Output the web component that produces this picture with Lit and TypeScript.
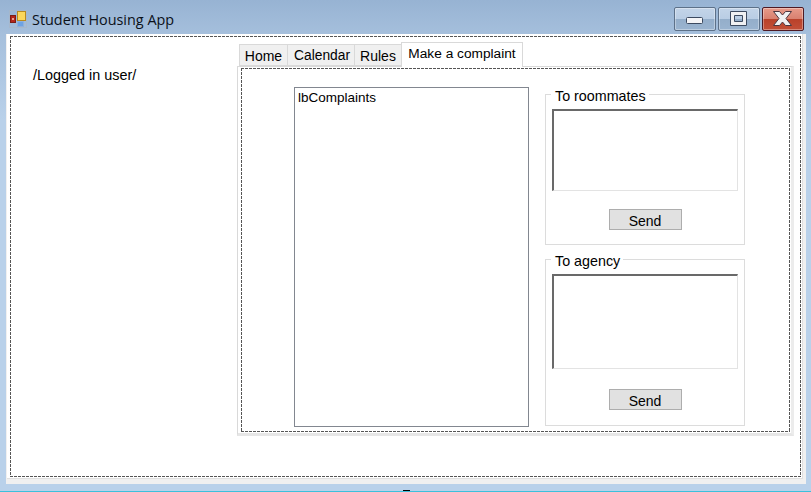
import { html, css, LitElement, svg } from 'lit'
import { customElement } from 'lit/decorators.js'

const TABS = ['Home', 'Calendar', 'Rules']

@customElement('app-root')
export class AppRoot extends LitElement {
  private appIcon() {
    return html`<svg class="app-icon" width="18" height="18" viewBox="0 0 18 18">
      <rect x="0.5" y="0.5" width="17" height="17" fill="none" stroke="#a9b6c6" stroke-opacity="0.7" />
      <rect x="1.5" y="5.500" width="5" height="7" fill="#b3261c" stroke="#7d1d16" />
      <rect x="3" y="8" width="2" height="2" fill="#e8a090" />
      <rect x="8.5" y="1.5" width="8" height="9" fill="#fbd75b" stroke="#b98a1e" />
      <rect x="8.5" y="11.5" width="6" height="5" fill="#6ea3e4" stroke="#8fb0da" />
    </svg>`
  }

  private captionGlyph(kind: string) {
    if (kind === 'min') {
      return svg`<rect x="12.5" y="10.5" width="16" height="6" rx="1" fill="#f4f4f6" stroke="#3c4a60" />`
    }
    if (kind === 'max') {
      return svg`<path fill-rule="evenodd" d="M12.500 4.500h16v14h-16zM16.500 8.500v6h8v-6z" fill="#f0f1f3" stroke="#3c4a60" />`
    }
    return svg`<path d="M11.500 4.500h6l3 3.500 3-3.500h6l-5.500 7 5.500 7h-6l-3-3.500-3 3.500h-6l5.500-7z" fill="#f0f0f2" stroke="#4c3640" />`
  }

  private captionButton(kind: string) {
    return html`<div class="cap ${kind}">
      <svg width="42" height="24" viewBox="0 0 42 24">${this.captionGlyph(kind)}</svg>
    </div>`
  }

  private group(label: string, cls: string) {
    return html`<div class="group ${cls}">
      <span class="legend">${label}</span>
      <div class="textbox"></div>
      <div class="send">Send</div>
    </div>`
  }

  render() {
    return html`
      <div class="titlebar">
        ${this.appIcon()}
        <span class="title">Student Housing App</span>
        <div class="caption">
          ${this.captionButton('min')} ${this.captionButton('max')} ${this.captionButton('close')}
        </div>
      </div>
      <div class="client">
        <div class="surface">
          <div class="dashed form">
            <div class="user">/Logged in user/</div>
            <div class="tabcontrol">
              <div class="tabs">
                ${TABS.map((t) => html`<div class="tab">${t}</div>`)}
                <div class="tab active">Make a complaint</div>
              </div>
              <div class="panel">
                <div class="dashed page">
                  <div class="listbox">lbComplaints</div>
                  <div class="side">
                    ${this.group('To roommates', 'first')} ${this.group('To agency', 'second')}
                  </div>
                </div>
              </div>
            </div>
          </div>
        </div>
      </div>
      <div class="mark"></div>
    `
  }

  static styles = css`
    :host {
      display: block;
      position: relative;
      width: 811px;
      height: 492px;
      overflow: hidden;
      box-sizing: border-box;
      border-bottom: 1px solid #3cc0dc;
      background: linear-gradient(#97b3d3 0, #a5bfdc 34px, #b9d1ea 120px, #b9d1ea 100%);
      font-family: 'Liberation Sans', Arial, sans-serif;
      font-size: 14px;
      color: #000;
    }

    .titlebar {
      display: flex;
      align-items: flex-start;
      height: 34px;
      box-sizing: border-box;
      padding: 7px 7px 0 9px;
    }

    .app-icon {
      margin-top: 3px;
      flex: none;
    }

    .title {
      margin: 3px 0 0 5px;
      font-family: 'Open Sans', sans-serif;
      font-size: 14.4px;
      line-height: 20px;
      color: #0b1118;
    }

    .caption {
      display: flex;
      gap: 2px;
      margin-left: auto;
    }

    .cap {
      width: 42px;
      height: 24px;
      box-sizing: border-box;
      border: 1px solid #5d7189;
      border-radius: 2px;
      box-shadow: inset 0 0 0 1px rgba(255, 255, 255, 0.35);
      background: linear-gradient(#c3d4e8 0, #b9cde4 50%, #94aeca 50%, #9ab4d0 100%);
    }

    .cap svg {
      display: block;
      margin: -1px;
    }

    .close {
      border-color: #4e1a24;
      background: linear-gradient(#e79a8a 0, #d9806f 50%, #b9412a 50%, #c24f38 100%);
    }

    .client {
      width: 800px;
      height: 450px;
      margin-left: 6px;
      box-sizing: border-box;
      border: solid #f0f0f0;
      border-width: 0 3px 5px 1px;
    }

    .surface {
      height: 100%;
      box-sizing: border-box;
      background: #fff;
      border: solid #e0e0e0;
      border-width: 0 1px 1px 0;
      padding: 2px 1px 2px 3px;
    }

    .dashed {
      box-sizing: border-box;
      background-color: #fff;
      background-image: repeating-linear-gradient(90deg, #555 0 3px, transparent 3px 4px),
        repeating-linear-gradient(90deg, #555 0 3px, transparent 3px 4px),
        repeating-linear-gradient(180deg, #555 0 3px, transparent 3px 4px),
        repeating-linear-gradient(180deg, #555 0 3px, transparent 3px 4px);
      background-size: 100% 1px, 100% 1px, 1px 100%, 1px 100%;
      background-position: 0 0, 0 100%, 0 0, 100% 0;
      background-repeat: no-repeat;
    }

    .form {
      display: flex;
      height: 441px;
      padding: 6px 0 0 23px;
    }

    .user {
      width: 204px;
      padding-top: 25px;
      font-size: 14.4px;
      line-height: 16px;
      white-space: nowrap;
    }

    .tabcontrol {
      width: 557px;
    }

    .tabs {
      display: flex;
      align-items: flex-end;
      height: 24px;
      margin-left: 2px;
      position: relative;
      z-index: 1;
    }

    .tab {
      height: 22px;
      box-sizing: border-box;
      padding-top: 3px;
      background: #f0f0f0;
      border: 1px solid #d9d9d9;
      border-right-width: 0;
      line-height: 16px;
      text-align: center;
      white-space: nowrap;
    }

    .tab:nth-child(1) {
      width: 48px;
    }

    .tab:nth-child(2) {
      width: 67px;
      padding-left: 2px;
      font-size: 13.8px;
    }

    .tab:nth-child(3) {
      width: 47px;
    }

    .tab.active {
      width: 122px;
      height: 25px;
      margin-bottom: -1px;
      padding-top: 3px;
      font-size: 13.7px;
      background: #fff;
      border-width: 1px 1px 0;
    }

    .panel {
      box-sizing: border-box;
      height: 370px;
      border: 1px solid #d9d9d9;
      border-right: 3px solid #ececec;
      border-bottom: 3px solid #e6e6e6;
      padding: 1px 1px 1px 3px;
    }

    .page {
      display: flex;
      height: 100%;
      padding: 19px 0 0 53px;
    }

    .listbox {
      width: 235px;
      height: 340px;
      box-sizing: border-box;
      border: 1px solid #828790;
      padding: 2px 3px;
      font-size: 13.5px;
      line-height: 16px;
    }

    .side {
      display: flex;
      flex-direction: column;
      gap: 14px;
      margin: 7px 0 0 16px;
      width: 200px;
    }

    .group {
      position: relative;
      box-sizing: border-box;
      border: 1px solid #dcdcdc;
      padding: 14px 6px 0;
    }

    .group.first {
      height: 151px;
    }

    .group.second {
      height: 167px;
    }

    .legend {
      position: absolute;
      top: -7px;
      left: 5px;
      padding: 0 3px 0 4px;
      background: #fff;
      font-size: 14.3px;
      line-height: 16px;
      white-space: nowrap;
    }

    .textbox {
      box-sizing: border-box;
      width: 186px;
      border: solid #e3e3e3;
      border-width: 2px 1px 1px 2px;
      border-top-color: #696969;
      border-left-color: #696969;
      background: #fff;
    }

    .first .textbox {
      height: 82px;
    }

    .second .textbox {
      height: 95px;
    }

    .send {
      box-sizing: border-box;
      width: 73px;
      height: 21px;
      margin-left: 57px;
      padding: 1px 1px 0 0;
      border: 1px solid #adadad;
      background: #e1e1e1;
      text-align: center;
      line-height: 21px;
    }

    .first .send {
      margin-top: 18px;
    }

    .second .send {
      margin-top: 20px;
    }

    .mark {
      position: absolute;
      left: 403px;
      bottom: 0;
      width: 7px;
      height: 1px;
      background: #000;
    }
  `
}

declare global {
  interface HTMLElementTagNameMap {
    'app-root': AppRoot
  }
}
